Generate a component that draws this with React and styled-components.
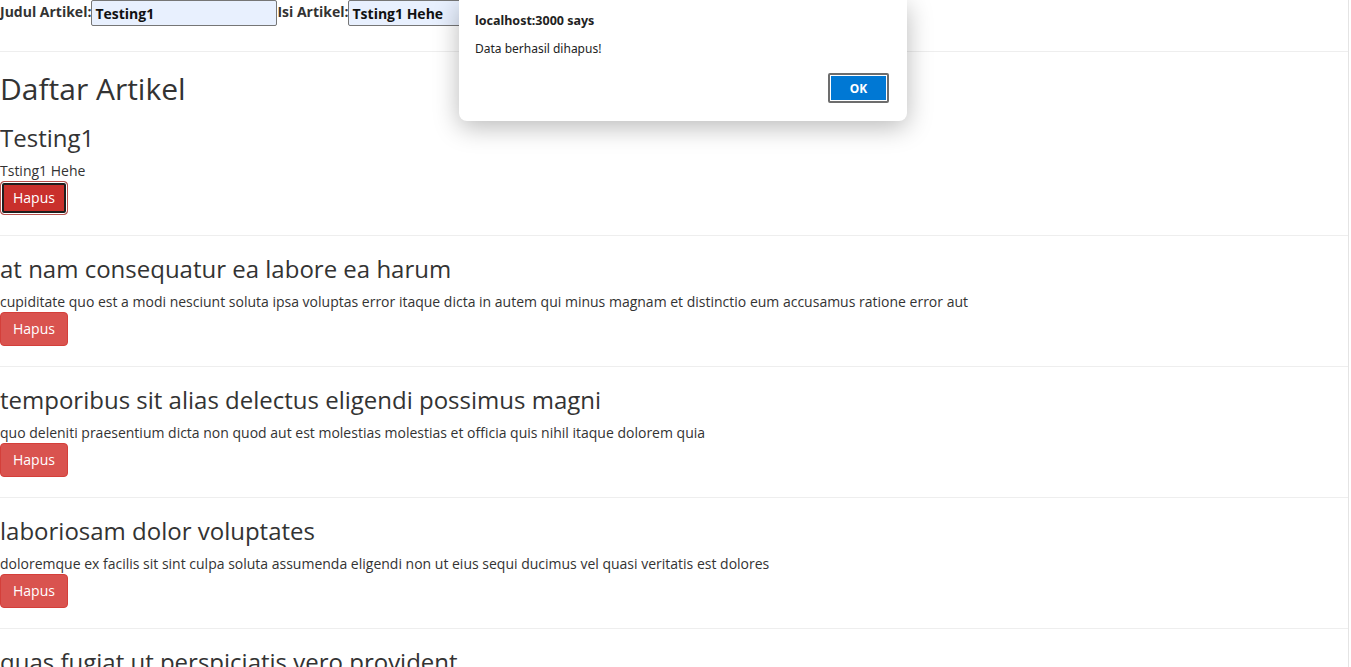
import styled, {createGlobalStyle} from "styled-components";
import {useState} from "react";

const GlobalStyle = createGlobalStyle`
  html, body {
    margin: 0;
    padding: 0;
    background: #fff;
  }
  body {
    font-family: "Open Sans", "Noto Sans", sans-serif;
    font-size: 14px;
    line-height: 1.42857;
    color: #333;
    overflow: hidden;
  }
`;

const Page = styled.div`
  width: calc(100vw - 3px);
  min-height: 100vh;
  border-right: 1px solid #e4e4e4;
  position: relative;
`;

const Form = styled.form`
  display: flex;
  align-items: flex-start;
  height: 31px;
`;

const Label = styled.label`
  font-weight: bold;
  line-height: 24px;
  white-space: nowrap;
`;

const Input = styled.input`
  box-sizing: border-box;
  width: 186px;
  height: 26px;
  margin: 0;
  padding: 0 3px;
  border: 1px solid #767676;
  border-radius: 2px;
  background: #e8f0fe;
  font-family: inherit;
  font-size: 14px;
  font-weight: bold;
  color: #111;
`;

const Rule = styled.hr`
  margin: 20px 0;
  border: 0;
  border-top: 1px solid #eee;
`;

const PageTitle = styled.h2`
  font-size: 30px;
  font-weight: 500;
  line-height: 33px;
  margin: 20px 0 10px;
`;

const ArticleTitle = styled.h3`
  font-size: 24px;
  font-weight: 500;
  line-height: 26px;
  margin: 20px 0 10px;
`;

const Body = styled.p`
  margin: 0;
  line-height: 20px;
`;

const DeleteButton = styled.button`
  display: block;
  box-sizing: border-box;
  height: 34px;
  padding: 6px 12px;
  font-family: inherit;
  font-size: 14px;
  line-height: 20px;
  color: #fff;
  border-radius: 4px;
  cursor: pointer;
  background: ${p => (p.$focused ? "#c9302c" : "#d9534f")};
  border: 1px solid ${p => (p.$focused ? "#b8504d" : "#d43f3a")};
  box-shadow: ${p => (p.$focused ? "inset 0 0 0 1px #fff, inset 0 0 0 3px #1e1e1e" : "none")};
`;

const Dialog = styled.div`
  position: absolute;
  top: 0;
  left: 459px;
  width: 448px;
  height: 121px;
  box-sizing: border-box;
  padding: 12px 16px 0;
  background: #fff;
  border-radius: 0 0 8px 8px;
  box-shadow: 0 6px 26px rgba(0, 0, 0, 0.28);
  font-family: "Noto Sans", "Open Sans", sans-serif;
  color: #222;
`;

const DialogTitle = styled.div`
  font-size: 12.5px;
  font-weight: 700;
  line-height: 18px;
`;

const DialogText = styled.div`
  margin-top: 10px;
  font-size: 12px;
  line-height: 18px;
`;

const DialogActions = styled.div`
  display: flex;
  justify-content: flex-end;
  margin-top: 15px;
  padding-right: 2px;
`;

const OkButton = styled.button`
  box-sizing: border-box;
  width: 61px;
  height: 30px;
  border: 2px solid #6d6d6d;
  box-shadow: inset 0 0 0 1px #fff;
  background: #0078d4;
  color: #fff;
  font-family: inherit;
  font-size: 12px;
  font-weight: 700;
  border-radius: 2px;
`;

const articles = [
    {title: "Testing1", body: "Tsting1 Hehe"},
    {
        title: "at nam consequatur ea labore ea harum",
        body: "cupiditate quo est a modi nesciunt soluta ipsa voluptas error itaque dicta in autem qui minus magnam et distinctio eum accusamus ratione error aut"
    },
    {
        title: "temporibus sit alias delectus eligendi possimus magni",
        body: "quo deleniti praesentium dicta non quod aut est molestias molestias et officia quis nihil itaque dolorem quia"
    },
    {
        title: "laboriosam dolor voluptates",
        body: "doloremque ex facilis sit sint culpa soluta assumenda eligendi non ut eius sequi ducimus vel quasi veritatis est dolores"
    },
    {
        title: "quas fugiat ut perspiciatis vero provident",
        body: "eum non blanditiis soluta porro quibusdam voluptas vel voluptatem qui placeat dolores qui velit aut"
    }
];

const App = () => {
    const [judul, setJudul] = useState("Testing1");
    const [isi, setIsi] = useState("Tsting1 Hehe");

    return (
        <Page>
            <GlobalStyle/>
            <Form onSubmit={(e) => e.preventDefault()}>
                <Label>Judul Artikel:</Label>
                <Input value={judul} onChange={(e) => setJudul(e.target.value)}/>
                <Label>Isi Artikel:</Label>
                <Input value={isi} onChange={(e) => setIsi(e.target.value)}/>
            </Form>
            <Rule/>
            <PageTitle>Daftar Artikel</PageTitle>
            {articles.map((a, i) => (
                <div key={i}>
                    <ArticleTitle>{a.title}</ArticleTitle>
                    <Body>{a.body}</Body>
                    <DeleteButton $focused={i === 0}>Hapus</DeleteButton>
                    <Rule/>
                </div>
            ))}
            <Dialog>
                <DialogTitle>localhost:3000 says</DialogTitle>
                <DialogText>Data berhasil dihapus!</DialogText>
                <DialogActions>
                    <OkButton>OK</OkButton>
                </DialogActions>
            </Dialog>
        </Page>
    );
};

export default App;
